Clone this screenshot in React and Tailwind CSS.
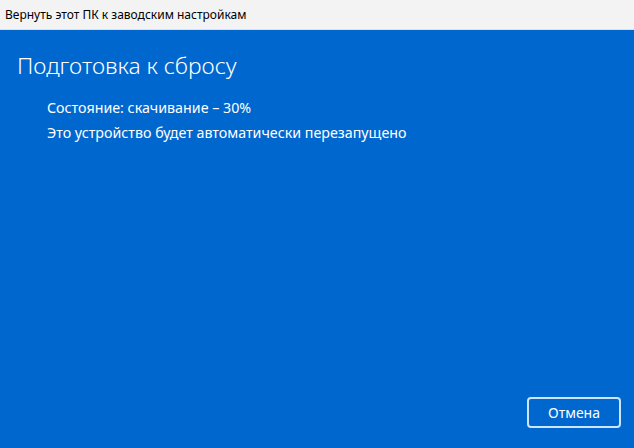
import React from "react";

function App() {
  return (
    <div
      className="w-[634px] h-[448px] flex flex-col overflow-hidden"
      style={{ fontFamily: '"Noto Sans", "Open Sans", sans-serif' }}
    >
      {/* Title bar */}
      <div className="h-[30px] bg-[#f3f3f3] flex items-center pl-[5px] text-[12px] text-black border-b border-[#e0e0e0]">
        Вернуть этот ПК к заводским настройкам
      </div>

      {/* Blue body */}
      <div className="flex-1 bg-[#0067cf] text-white flex flex-col">
        <h1 className="text-[22.8px] font-light mt-[21px] ml-[17px] leading-[30px]">
          Подготовка к сбросу
        </h1>
        <div className="ml-[47px] mt-[14px] text-[14.25px] leading-[25px]">
          <p>Состояние: скачивание – 30%</p>
          <p>Это устройство будет автоматически перезапущено</p>
        </div>
        <div className="flex-1" />
        <div className="flex justify-end pr-[13px] pb-[20px]">
          <button className="w-[94px] h-[31px] border-2 border-[#cde6ff] rounded-[4px] text-[14px] text-white">
            Отмена
          </button>
        </div>
      </div>
    </div>
  );
}

export default App;
